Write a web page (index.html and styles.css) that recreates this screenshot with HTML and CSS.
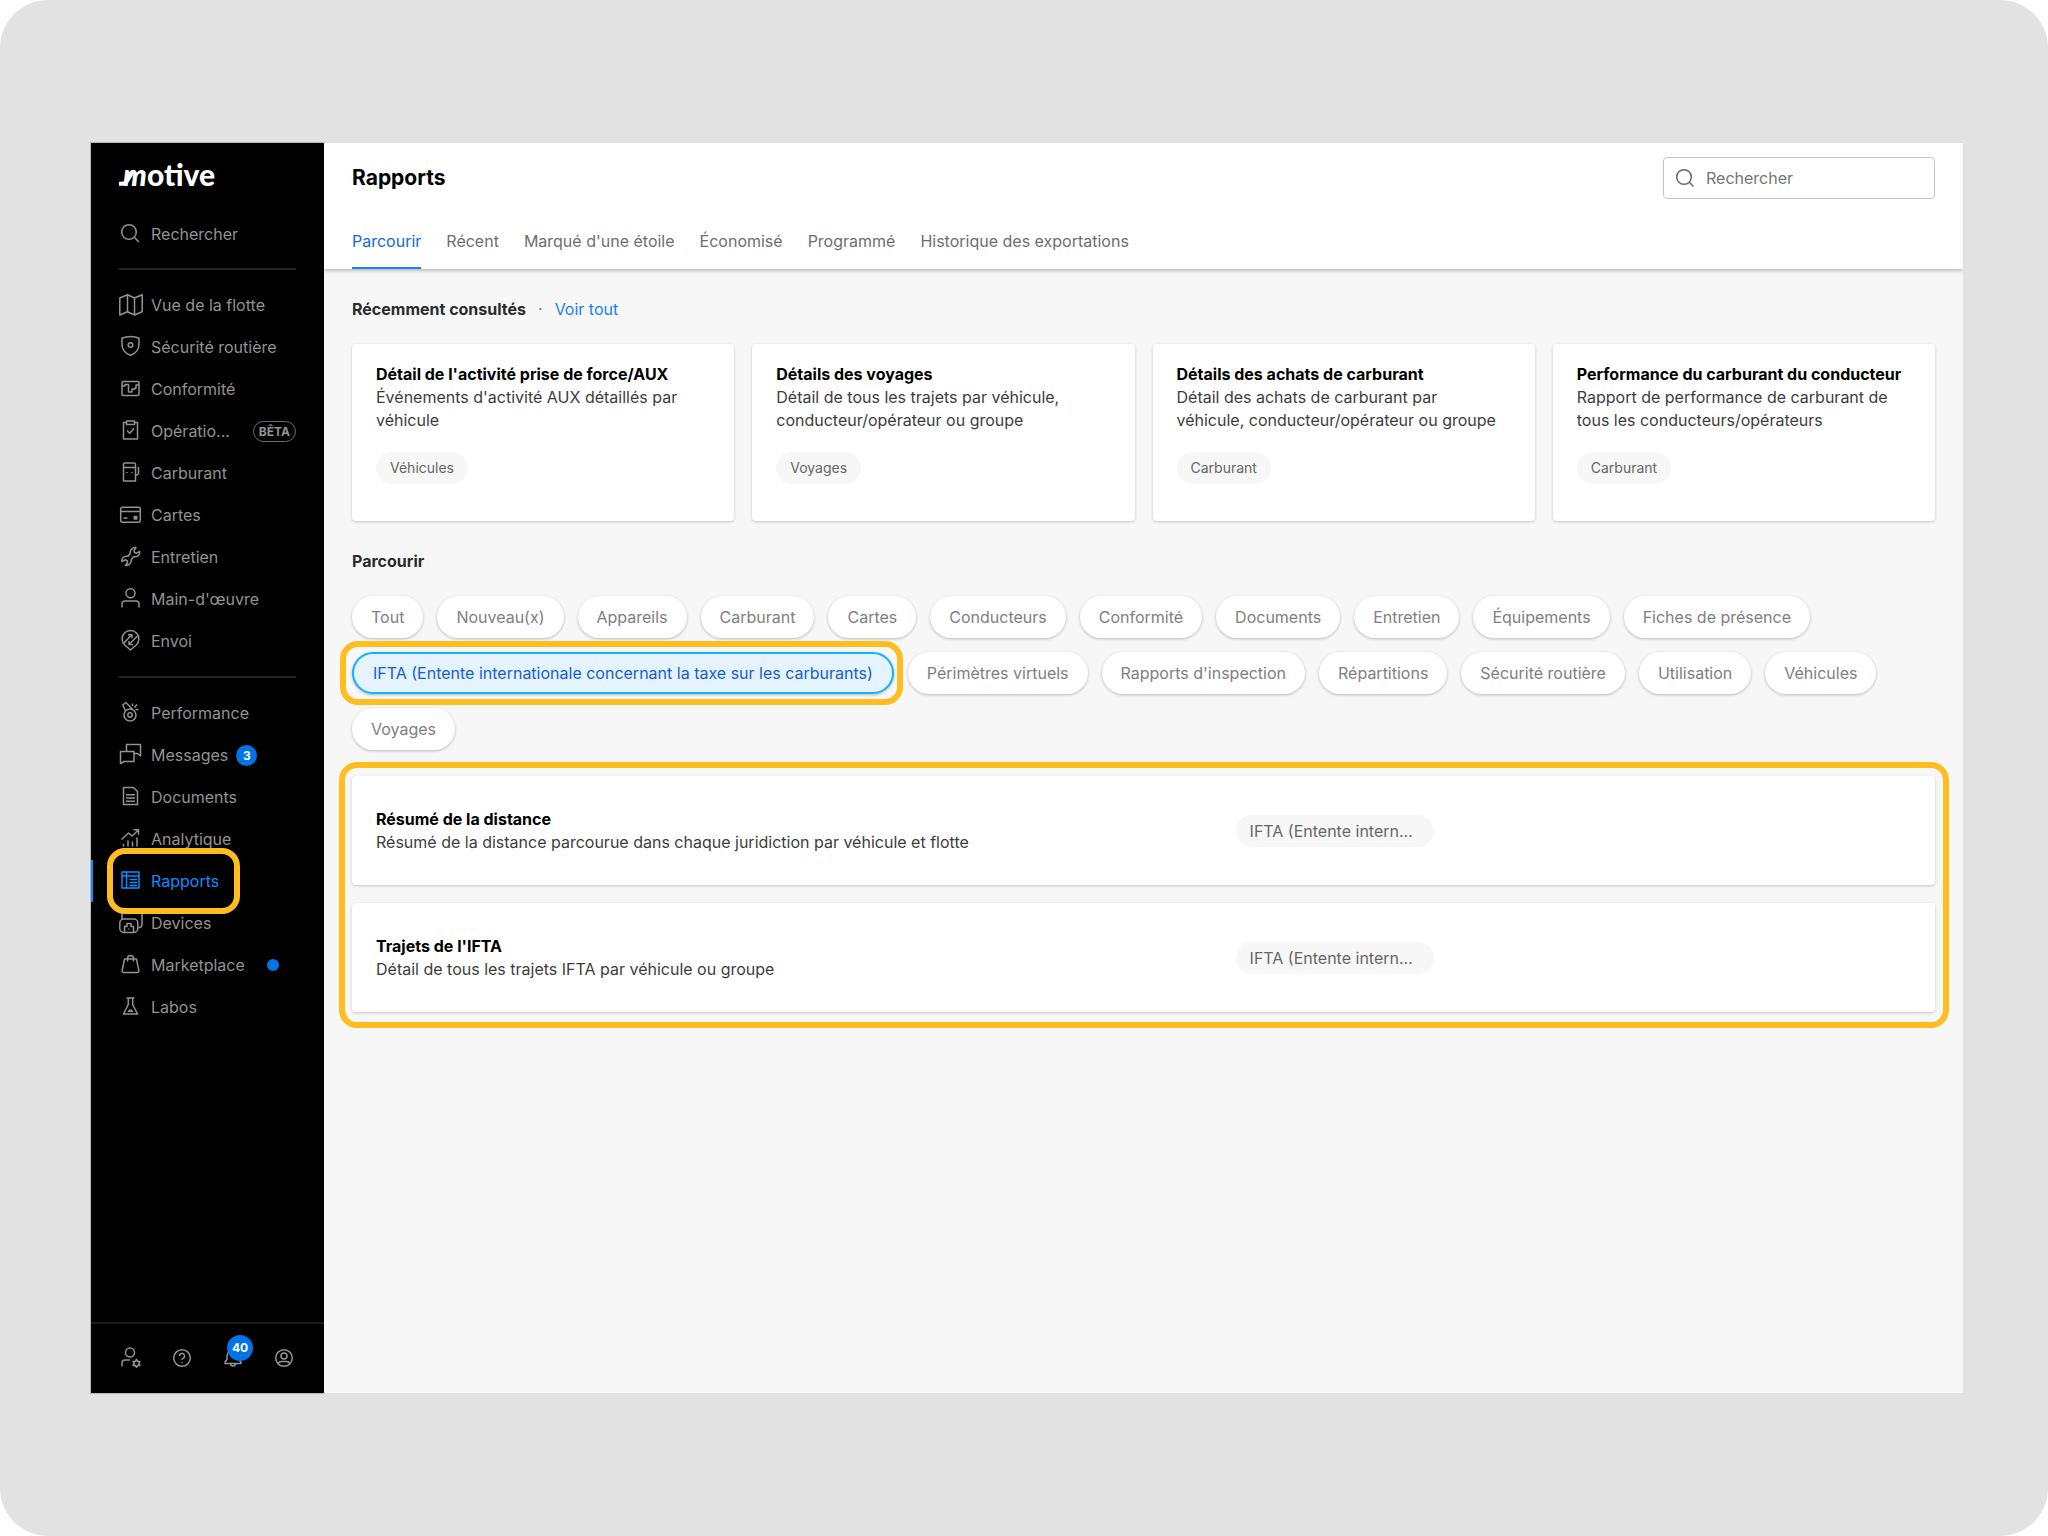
FILE: index.html
```html
<!DOCTYPE html>
<html lang="fr">
<head>
  <meta charset="UTF-8">
  <meta name="viewport" content="width=device-width, initial-scale=1.0">
  <title>Motive - Rapports</title>
  <link rel="stylesheet" href="styles.css">
</head>
<body>
  <div class="stage">
    <div class="app">
      <aside class="sidebar">
        <a href="#" class="logo">
          <svg width="14" height="18" viewBox="0 0 14 18"><path d="M0 15.800h3c2.500 0 4-1 5.500-3.500L14 3"/></svg>
          <span><i>m</i>otive</span>
        </a>

        <a href="#" class="nav-item nav-search">
          <svg class="icon" viewBox="0 0 24 24"><circle cx="10" cy="10" r="7.300"/><path d="M15.500 15.500l4.500 4.500"/></svg>
          <span>Rechercher</span>
        </a>

        <hr class="divider">

        <nav class="nav">
          <a href="#" class="nav-item">
            <svg class="icon" viewBox="0 0 24 24"><path d="M.8 5l7.700-3.200 7 3.200 7.700-3.200v17l-7.700 3.200-7-3.200L.8 22zM8.500 2v17M15.500 5v17"/></svg>
            <span>Vue de la flotte</span>
          </a>
          <a href="#" class="nav-item">
            <svg class="icon" viewBox="0 0 24 24"><path d="M11.500 1.500c3 0 6 .6 8.500 1.700V9c0 6-3.500 9.500-8.500 11.200C6.500 18.500 3 15 3 9V3.200c2.500-1.100 5.500-1.700 8.500-1.700z"/><circle cx="11.500" cy="10" r="2.300"/></svg>
            <span>Sécurité routière</span>
          </a>
          <a href="#" class="nav-item">
            <svg class="icon" viewBox="0 0 24 24"><rect x="3" y="4.500" width="17" height="14" rx="1.500"/><path d="M3 9h3V7.500h3.500v7.500H13v-3h3v-1h1V8h3"/></svg>
            <span>Conformité</span>
          </a>
          <a href="#" class="nav-item">
            <svg class="icon" viewBox="0 0 24 24"><path d="M7.500 3.500h-3V20h14V3.500h-3"/><path d="M7.500 2h8v3.500h-8zM8 11.500l2.800 2.700 4.200-5"/></svg>
            <span>Opératio...</span>
            <span class="beta">BÊTA</span>
          </a>
          <a href="#" class="nav-item">
            <svg class="icon" viewBox="0 0 24 24"><path d="M4.500 20V3.500A1.500 1.500 0 0 1 6 2h9a1.500 1.500 0 0 1 1.500 1.500V20zM4.500 6.500h12M16.500 14h1.500l1.500-1.500V6"/><path d="M8 11v1M13 11v1"/></svg>
            <span>Carburant</span>
          </a>
          <a href="#" class="nav-item">
            <svg class="icon" viewBox="0 0 24 24"><rect x="1.700" y="4.300" width="19.600" height="15" rx="2"/><path d="M1.700 8.500h19.600M4.500 15h4"/><rect class="fill" x="14.500" y="12.700" width="4" height="4" rx="1"/></svg>
            <span>Cartes</span>
          </a>
          <a href="#" class="nav-item">
            <svg class="icon" viewBox="0 0 24 24"><path d="M11.200 8.300C10.800 5 13 2.500 17 2.500l-2 3 .5 2 2 .7L20.700 6.500c.3 3-1.700 5.800-6.200 5.300l-2.200 2.900c.4 3.300-1.800 5.800-5.800 5.800l2-3-.5-2-2-.7L2.800 16.500c-.3-3 1.700-5.800 6.200-5.300z"/></svg>
            <span>Entretien</span>
          </a>
          <a href="#" class="nav-item">
            <svg class="icon" viewBox="0 0 24 24"><circle cx="11.500" cy="6.300" r="4.500"/><path d="M3 20.500V17a3 3 0 0 1 3-3h11a3 3 0 0 1 3 3v3.500"/></svg>
            <span>Main-d'œuvre</span>
          </a>
          <a href="#" class="nav-item">
            <svg class="icon" viewBox="0 0 24 24"><path d="M11.500 21l-5.800-5a8.400 8.400 0 1 1 11.600 0z"/><path d="M5 14l7.500-8M9 5.800h4V9M18.500 7l-8 8M14 15.500h-4V12"/></svg>
            <span>Envoi</span>
          </a>
        </nav>

        <hr class="divider">

        <nav class="nav">
          <a href="#" class="nav-item">
            <svg class="icon" viewBox="0 0 24 24"><circle cx="11" cy="14" r="6"/><circle cx="11" cy="14" r="2.200"/><path d="M6.500 10L3.800 4l3-2.500 7 7M13.500 5V2.500M15.500 6.500l2.500-3M16.500 8.500h3"/></svg>
            <span>Performance</span>
          </a>
          <a href="#" class="nav-item">
            <svg class="icon" viewBox="0 0 24 24"><path d="M7.500 8.500v-7h14V13l-3-2.500h-3.500"/><path d="M1.500 8.500H15v10H5l-3.500 2z"/></svg>
            <span>Messages</span>
            <span class="count">3</span>
          </a>
          <a href="#" class="nav-item">
            <svg class="icon" viewBox="0 0 24 24"><path d="M4.500 2.500h10l4 4v13h-14zM7 9.800h9M7 13h9M7 16.200h9"/></svg>
            <span>Documents</span>
          </a>
          <a href="#" class="nav-item">
            <svg class="icon" viewBox="0 0 24 24"><path d="M2.500 12.500L9.500 6l3.500 3 6.500-6M14.500 2.800h5v5M4.500 19.500V17M9 19.500v-6M13.500 19.500v-5M18 19.500v-9"/></svg>
            <span>Analytique</span>
          </a>
          <a href="#" class="nav-item active">
            <svg class="icon" viewBox="0 0 24 24"><path d="M3 3h17v16H3zM3 7h17M7.500 3v16M10.500 10.500h7.500M10.500 13.500h7.500M10.500 16.500h7.500"/></svg>
            <span>Rapports</span>
          </a>
          <a href="#" class="nav-item">
            <svg class="icon" viewBox="0 0 24 24"><path d="M3 8V2.500a2 2 0 0 1 2-2h16a2 2 0 0 1 2 2v11a3 3 0 0 1-3.500 3"/><rect x=".8" y="8" width="18" height="13.500" rx="4"/><path d="M5.500 21v-5.500H8v-3h4v3h2.500V21M9.800 17.500v1"/></svg>
            <span>Devices</span>
          </a>
          <a href="#" class="nav-item">
            <svg class="icon" viewBox="0 0 24 24"><path d="M5.500 6h12l2.300 11.500a1.500 1.500 0 0 1-1.500 2H4.700a1.500 1.500 0 0 1-1.500-2zM8.500 8.500v-3a3 3 0 0 1 6 0v3"/></svg>
            <span>Marketplace</span>
            <span class="dot"></span>
          </a>
          <a href="#" class="nav-item">
            <svg class="icon" viewBox="0 0 24 24"><path d="M7.500 3h8M9.300 3v6.500L4.500 19h14l-4.800-9.500V3"/><path class="fill" d="M8.300 17h6.400l-2-2.500h-2.400z"/></svg>
            <span>Labos</span>
          </a>
        </nav>

        <div class="sidebar-footer">
          <button type="button" aria-label="Admin">
            <svg class="icon" viewBox="0 0 24 24"><circle cx="11" cy="6.500" r="4.500"/><path d="M3 20.500V17a3 3 0 0 1 3-3h5"/><path d="M17.500 13.500l1.200 2 2.300-.1-1.200 2 1.200 2-2.300-.1-1.200 2-1.200-2-2.300.1 1.200-2-1.200-2 2.300.1z"/></svg>
          </button>
          <button type="button" aria-label="Aide">
            <svg class="icon" viewBox="0 0 24 24"><circle cx="12" cy="12" r="8.300"/><path d="M9.500 10a2.500 2.500 0 1 1 3.700 2.200c-.8.500-1.200.9-1.200 1.900M12 16v1.300"/></svg>
          </button>
          <button type="button" aria-label="Notifications">
            <svg class="icon" viewBox="0 0 24 24"><path d="M4 17.500v-1.300l2-2.700V10a6 6 0 0 1 12 0v3.500l2 2.700v1.300zM9.500 17.500a2.500 2.500 0 0 0 5 0"/></svg>
            <span class="bell-count">40</span>
          </button>
          <button type="button" aria-label="Compte">
            <svg class="icon" viewBox="0 0 24 24"><circle cx="12" cy="12" r="8.300"/><circle cx="12" cy="10" r="3"/><path d="M6 17.500c1-1.700 2-2 3.500-2h5c1.500 0 2.500.3 3.500 2"/></svg>
          </button>
        </div>
      </aside>

      <main class="main">
        <header class="header">
          <div class="header-top">
            <h1>Rapports</h1>
            <label class="search">
              <svg class="icon" viewBox="0 0 24 24"><circle cx="11" cy="11" r="7.300"/><path d="M16.300 16.300l4.200 4.200"/></svg>
              <input type="text" placeholder="Rechercher" aria-label="Rechercher">
            </label>
          </div>
          <nav class="tabs">
            <a href="#" class="tab active">Parcourir</a>
            <a href="#" class="tab">Récent</a>
            <a href="#" class="tab">Marqué d'une étoile</a>
            <a href="#" class="tab">Économisé</a>
            <a href="#" class="tab">Programmé</a>
            <a href="#" class="tab">Historique des exportations</a>
          </nav>
        </header>

        <div class="content">
          <div class="section-head">
            <h2>Récemment consultés</h2>
            <span class="sep">·</span>
            <a href="#">Voir tout</a>
          </div>

          <div class="cards">
            <article class="card">
              <h3>Détail de l'activité prise de force/AUX</h3>
              <p>Événements d'activité AUX détaillés par véhicule</p>
              <span class="tag">Véhicules</span>
            </article>
            <article class="card">
              <h3>Détails des voyages</h3>
              <p>Détail de tous les trajets par véhicule, conducteur/opérateur ou groupe</p>
              <span class="tag">Voyages</span>
            </article>
            <article class="card">
              <h3>Détails des achats de carburant</h3>
              <p>Détail des achats de carburant par véhicule, conducteur/opérateur ou groupe</p>
              <span class="tag">Carburant</span>
            </article>
            <article class="card">
              <h3>Performance du carburant du conducteur</h3>
              <p>Rapport de performance de carburant de tous les conducteurs/opérateurs</p>
              <span class="tag">Carburant</span>
            </article>
          </div>

          <div class="section-head">
            <h2>Parcourir</h2>
          </div>

          <div class="chips">
            <button type="button" class="chip">Tout</button>
            <button type="button" class="chip">Nouveau(x)</button>
            <button type="button" class="chip">Appareils</button>
            <button type="button" class="chip">Carburant</button>
            <button type="button" class="chip">Cartes</button>
            <button type="button" class="chip">Conducteurs</button>
            <button type="button" class="chip">Conformité</button>
            <button type="button" class="chip">Documents</button>
            <button type="button" class="chip">Entretien</button>
            <button type="button" class="chip">Équipements</button>
            <button type="button" class="chip">Fiches de présence</button>
            <button type="button" class="chip selected">IFTA (Entente internationale concernant la taxe sur les carburants)</button>
            <button type="button" class="chip">Périmètres virtuels</button>
            <button type="button" class="chip">Rapports d'inspection</button>
            <button type="button" class="chip">Répartitions</button>
            <button type="button" class="chip">Sécurité routière</button>
            <button type="button" class="chip">Utilisation</button>
            <button type="button" class="chip">Véhicules</button>
            <button type="button" class="chip">Voyages</button>
          </div>

          <div class="reports">
            <article class="report">
              <div>
                <h3>Résumé de la distance</h3>
                <p>Résumé de la distance parcourue dans chaque juridiction par véhicule et flotte</p>
              </div>
              <span class="tag tag-large">IFTA (Entente intern...</span>
            </article>
            <article class="report">
              <div>
                <h3>Trajets de l'IFTA</h3>
                <p>Détail de tous les trajets IFTA par véhicule ou groupe</p>
              </div>
              <span class="tag tag-large">IFTA (Entente intern...</span>
            </article>
          </div>
        </div>
      </main>
    </div>
  </div>
</body>
</html>
```

FILE: styles.css
```css
*, *::before, *::after {
  box-sizing: border-box;
}
body {
  margin: 0;
  background: #fff;
  font-family: Inter, "Liberation Sans", sans-serif;
  font-size: 16px;
  line-height: 24px;
  color: #3d3d3d;
}
h1, h2, h3, p {
  margin: 0;
}
a {
  color: inherit;
  text-decoration: none;
}
button, input {
  font: inherit;
}
.stage {
  display: flex;
  min-height: 100vh;
  padding: 143px 85px 143px 91px;
  background: #e2e2e2;
  border-radius: 48px;
}
.app {
  display: flex;
  flex: 1;
  min-width: 0;
}
.icon {
  flex: none;
  width: 24px;
  height: 24px;
  fill: none;
  stroke: currentColor;
  stroke-width: 1.5;
  stroke-linejoin: round;
}
.icon .fill {
  fill: currentColor;
  stroke: none;
}

/* sidebar */
.sidebar {
  display: flex;
  flex-direction: column;
  flex: none;
  width: 233px;
  padding: 10px 28px 0;
  background: #000;
  color: #929292;
  box-shadow: 0 0 0 1px #b8b8b8;
}
.logo {
  display: flex;
  align-items: baseline;
  color: #fff;
  font-family: Lato, sans-serif;
  font-size: 30px;
  line-height: 42px;
  font-weight: 900;
}
.logo svg {
  margin-right: -10px;
  fill: none;
  stroke: #fff;
  stroke-width: 4;
}
.nav-item {
  position: relative;
  display: flex;
  align-items: center;
  gap: 8px;
  height: 42px;
  white-space: nowrap;
}
.nav-search {
  margin-top: 18px;
}
.divider {
  width: 100%;
  height: 2px;
  margin: 13px 0 14px;
  border: none;
  background: #242424;
}
.nav + .divider {
  margin-top: 14px;
}
.beta {
  margin-left: auto;
  padding: 0 5px;
  border: 1px solid #6b6b6b;
  border-radius: 11px;
  font-size: 12px;
  line-height: 19px;
  font-weight: 700;
}
.count {
  width: 21px;
  height: 21px;
  border-radius: 50%;
  background: #0073e6;
  color: #fff;
  font-size: 12px;
  line-height: 21px;
  font-weight: 700;
  text-align: center;
}
.dot {
  width: 12px;
  height: 12px;
  margin-left: 14px;
  border-radius: 50%;
  background: #0073e6;
}
.nav-item.active {
  z-index: 1;
  color: #0a8cff;
}
.nav-item.active::before {
  content: "";
  position: absolute;
  top: 0;
  bottom: 0;
  left: -28px;
  width: 2px;
  background: #0a8cff;
}
.nav-item.active::after {
  content: "";
  position: absolute;
  top: -12px;
  bottom: -12px;
  left: -12px;
  width: 133px;
  border: 6px solid #ffbd1f;
  border-radius: 18px;
}
.sidebar-footer {
  display: flex;
  justify-content: space-between;
  align-items: center;
  height: 71px;
  margin: auto -28px 0;
  padding: 0 28px 2px;
  border-top: 2px solid #1a1a1a;
}
.sidebar-footer button {
  position: relative;
  width: 24px;
  height: 24px;
  padding: 0;
  border: none;
  background: none;
  color: inherit;
}
.bell-count {
  position: absolute;
  top: -11px;
  left: 6px;
  width: 26px;
  height: 26px;
  border-radius: 50%;
  background: #0073e6;
  color: #fff;
  font-size: 12px;
  line-height: 26px;
  font-weight: 700;
}

/* main */
.main {
  flex: 1;
  min-width: 0;
  background: #f7f7f7;
}
.header {
  padding: 14px 28px 0;
  background: #fff;
  box-shadow: 0 1px 4px rgba(0, 0, 0, 0.35);
  clip-path: inset(0 0 -8px 0);
}
.header-top {
  display: flex;
  justify-content: space-between;
  align-items: center;
}
h1 {
  color: #000;
  font-size: 21px;
  line-height: 28px;
  font-weight: 700;
}
.search {
  display: flex;
  align-items: center;
  gap: 9px;
  width: 272px;
  height: 42px;
  padding: 0 9px;
  border: 1px solid #c4c4c4;
  border-radius: 4px;
  color: #666;
}
.search input {
  flex: 1;
  min-width: 0;
  padding: 0;
  border: none;
  outline: none;
  background: none;
}
.search input::placeholder {
  color: #757575;
}
.tabs {
  display: flex;
  gap: 25px;
  margin-top: 14px;
}
.tab {
  padding: 16px 0 14px;
  border-bottom: 2px solid transparent;
  color: #6e6e6e;
}
.tab.active {
  border-color: #1a80f0;
  color: #1668d8;
}
.content {
  padding: 28px;
}
.section-head {
  display: flex;
  align-items: center;
  gap: 12px;
}
h2 {
  color: #2b2b2b;
  font-size: 16px;
  line-height: 24px;
  font-weight: 700;
}
.sep {
  color: #757575;
}
.section-head a {
  color: #1a80f0;
}
.cards {
  display: grid;
  grid-template-columns: repeat(4, 1fr);
  gap: 18px;
  margin: 23px 0 28px;
}
.card, .report {
  background: #fff;
  border-radius: 4px;
  box-shadow: 0 1px 3px rgba(0, 0, 0, 0.2);
}
.card {
  padding: 18px 28px 37px 24px;
}
h3 {
  color: #000;
  font-size: 16px;
  line-height: 24px;
  font-weight: 700;
  white-space: nowrap;
}
.card p, .report p {
  line-height: 23px;
}
.tag {
  display: inline-block;
  padding: 4px 14px;
  border-radius: 16px;
  background: #f7f7f7;
  color: #666;
  font-size: 14px;
}
.card .tag {
  margin-top: 20px;
}
.tag-large {
  width: 198px;
  font-size: 16px;
}
.chips {
  display: flex;
  flex-wrap: wrap;
  gap: 14px;
  margin: 23px 0 26px;
}
.chip {
  position: relative;
  height: 42px;
  padding: 0 19px;
  border: none;
  border-radius: 21px;
  background: #fff;
  color: #808080;
  box-shadow: 0 1px 3px rgba(0, 0, 0, 0.25);
}
.chip.selected {
  border: 2px solid #14b1ff;
  background: #e5f3ff;
  color: #1560cc;
}
.chip.selected::after {
  content: "";
  position: absolute;
  inset: -13px -11px -13px -14px;
  border: 6px solid #ffbd1f;
  border-radius: 18px;
}
.reports {
  position: relative;
  display: grid;
  gap: 18px;
}
.reports::after {
  content: "";
  position: absolute;
  inset: -14px -14px -16px -13px;
  border: 6px solid #ffbd1f;
  border-radius: 18px;
  pointer-events: none;
}
.report {
  display: grid;
  grid-template-columns: 56% 1fr;
  align-items: center;
  min-height: 109px;
  padding: 0 24px;
}
```
